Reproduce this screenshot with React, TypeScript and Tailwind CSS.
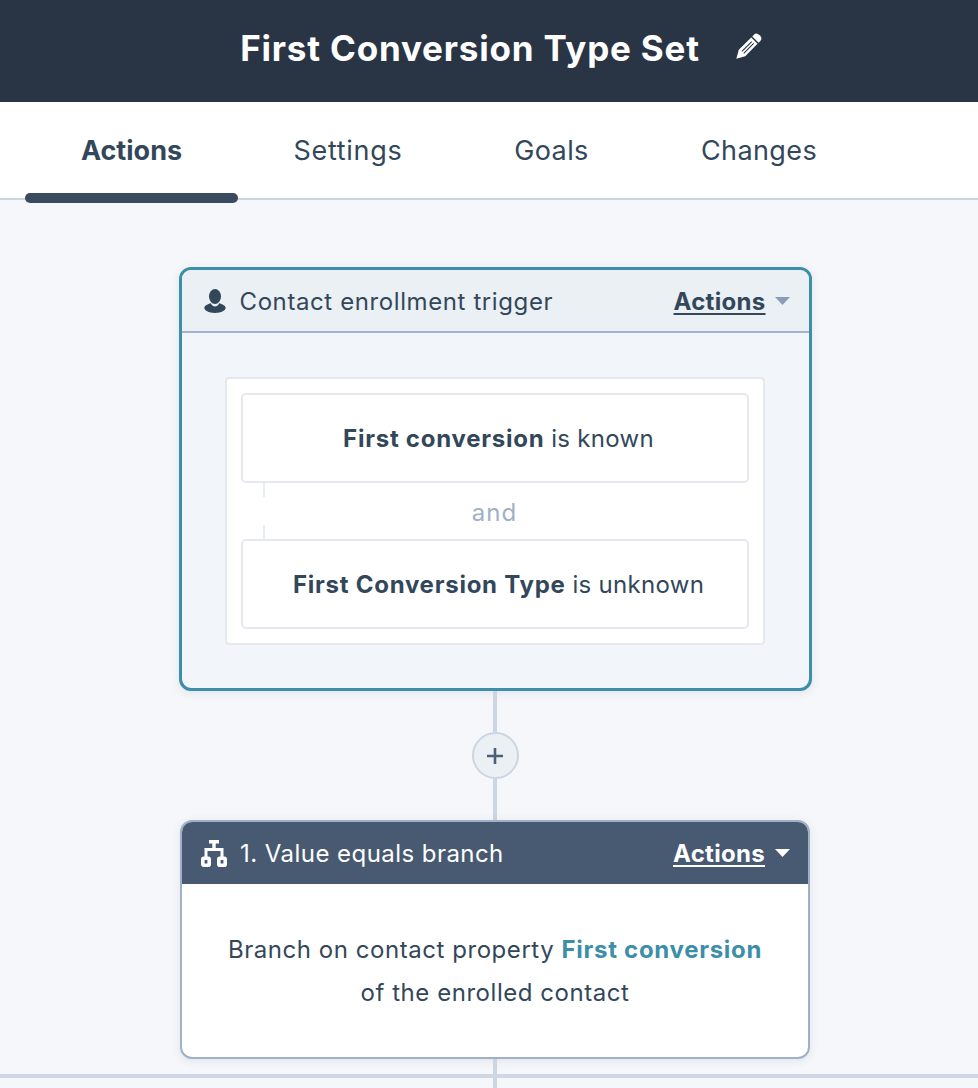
const font = "[font-family:'Inter','Lato',sans-serif]";

function Pencil() {
  return (
    <svg width="26" height="26" viewBox="0 0 26 26" className="block overflow-visible">
      <g transform="rotate(45 13 13)">
        <path d="M8.500 0a4.500 3.500 0 0 1 9 0V2.500H8.500Z" fill="#fff" />
        <path d="M8.500 4H17.500V21.500L13 29.500 8.500 21.500Z" fill="#fff" />
        <path d="M11.800 6.500V20.500M14.500 6.500V20.500" stroke="#293544" strokeWidth="1.100" fill="none" />
      </g>
    </svg>
  );
}

function Person() {
  return (
    <svg width="22" height="24" viewBox="0 0 22 24" className="block">
      <ellipse cx="11" cy="7.500" rx="6" ry="7.500" fill="#33475b" />
      <path d="M6.800 14.200C3.800 15.200.8 16 .3 18.800c0 2.700 4.200 5.200 10.700 5.200s10.700-2.500 10.700-5.200c-.5-2.800-3.500-3.600-6.500-4.600-1 2.300-2.700 3.300-4.200 3.300s-3.200-1-4.200-3.300Z" fill="#33475b" />
    </svg>
  );
}

function BranchIcon() {
  return (
    <svg width="26" height="27" viewBox="0 0 26 27" className="block" fill="none" stroke="#fff">
      <path d="M8 1.800H18M13 3V10" strokeWidth="3.400" />
      <path d="M5 17V9.500H21V17" strokeWidth="3" />
      <rect x="1.800" y="18.300" width="6.400" height="6.900" rx="1" strokeWidth="3.600" />
      <rect x="17.800" y="18.300" width="6.400" height="6.900" rx="1" strokeWidth="3.600" />
    </svg>
  );
}

function Caret({ color }: { color: string }) {
  return (
    <svg width="15" height="8" viewBox="0 0 15 8" className="block">
      <path d="M0 0H15L7.500 8Z" fill={color} />
    </svg>
  );
}

function Condition({ bold, rest }: { bold: string; rest: string }) {
  return (
    <div className="h-[90px] flex items-center justify-center rounded-[5px] border-2 border-[#e5e8ef] bg-white text-[24px] text-[#33475b] pl-[8px] pt-[2px]">
      <span>
        <b className="font-bold tracking-[0.75px]">{bold}</b> <span className="tracking-[0.3px]">{rest}</span>
      </span>
    </div>
  );
}

export default function App() {
  return (
    <div className={`w-[978px] h-[1088px] overflow-hidden flex flex-col bg-[#f5f7fa] ${font}`}>
      <header className="h-[102px] shrink-0 bg-[#293544] flex items-center justify-center gap-[35px] pl-[23px]">
        <h1 className="text-[35px] font-bold text-white leading-none pb-[6px] tracking-[0.8px]">First Conversion Type Set</h1>
        <div className="pb-[8px]"><Pencil /></div>
      </header>

      <nav className="h-[98px] shrink-0 bg-white border-b-2 border-[#cbd6e2] flex pl-[25px] relative text-[27px] text-[#33475b]">
        <div className="w-[213px] flex items-center justify-center font-bold pt-[2px] relative">
          Actions
          <span className="absolute left-0 right-0 bottom-[-5px] h-[10px] rounded-[5px] bg-[#3a4b60]" />
        </div>
        <div className="w-[220px] flex items-center justify-center pt-[2px] tracking-[0.7px]">Settings</div>
        <div className="w-[187px] flex items-center justify-center pt-[2px] tracking-[0.4px]">Goals</div>
        <div className="w-[228px] flex items-center justify-center pt-[2px] tracking-[0.4px]">Changes</div>
      </nav>

      <main className="flex-1 flex flex-col items-center pt-[67px] pl-[12px]">
        <section className="w-[633px] h-[424px] shrink-0 rounded-[12px] border-[3px] border-[#3d8ea9] bg-[#f2f5f9] shadow-[0_2px_10px_rgba(45,62,80,0.1)] flex flex-col overflow-hidden">
          <div className="h-[63px] shrink-0 bg-[#eaf0f4] border-b-2 border-[#a4b3c9] flex items-center pl-[22px] pr-[19px] text-[#33475b]">
            <Person />
            <span className="ml-[14px] pt-[2px] text-[24px] tracking-[0.6px]">Contact enrollment trigger</span>
            <span className="ml-auto pt-[2px] text-[24px] font-bold underline underline-offset-[3px] decoration-2 tracking-[0.3px]">Actions</span>
            <span className="ml-[9px]"><Caret color="#8a9db8" /></span>
          </div>
          <div className="pl-[43px] pr-[44px] pt-[44px]">
            <div className="h-[268px] rounded-[4px] border-2 border-[#e5e8ef] bg-white p-[14px] flex flex-col">
              <Condition bold="First conversion" rest="is known" />
              <div className="h-[56px] relative flex items-center justify-center text-[24px] text-[#9fb0c8] pt-[3px] tracking-[1px]">
                and
                <span className="absolute left-[22px] top-0 h-[14px] w-[2px] bg-[#e8ecf2]" />
                <span className="absolute left-[22px] bottom-0 h-[14px] w-[2px] bg-[#e8ecf2]" />
              </div>
              <Condition bold="First Conversion Type" rest="is unknown" />
            </div>
          </div>
        </section>

        <div className="w-[4px] h-[41px] shrink-0 bg-[#cbd6e2]" />
        <button className="size-[47px] shrink-0 rounded-full border-2 border-[#cbd6e2] bg-[#eaf0f4] flex items-center justify-center">
          <svg width="18" height="18" viewBox="0 0 18 18"><path d="M9 1V17M1 9H17" stroke="#4c5f7a" strokeWidth="2.600" /></svg>
        </button>
        <div className="w-[4px] h-[41px] shrink-0 bg-[#cbd6e2]" />

        <section className="w-[630px] h-[239px] shrink-0 rounded-[12px] border-2 border-[#a0b0c6] bg-white shadow-[0_2px_10px_rgba(45,62,80,0.1)] flex flex-col overflow-hidden">
          <div className="h-[62px] shrink-0 bg-[#475a72] flex items-center pl-[19px] pr-[18px] text-white">
            <BranchIcon />
            <span className="ml-[13px] pt-[2px] text-[24px] tracking-[0.45px]">1. Value equals branch</span>
            <span className="ml-auto pt-[2px] text-[24px] font-bold underline underline-offset-[3px] decoration-2 tracking-[0.3px]">Actions</span>
            <span className="ml-[10px]"><Caret color="#fff" /></span>
          </div>
          <div className="flex-1 flex flex-col items-center pt-[44px] text-[24px] leading-[43px] text-[#33475b] text-center tracking-[0.55px]">
            <p>Branch on contact property <b className="font-bold text-[#3d8ea9] tracking-[0.7px]">First conversion</b></p>
            <p>of the enrolled contact</p>
          </div>
        </section>

        <div className="w-[4px] h-[15px] shrink-0 bg-[#cbd6e2]" />
        <div className="w-[978px] -ml-[12px] h-[4px] shrink-0 bg-[#cfd9e5]" />
        <div className="w-[4px] h-[11px] shrink-0 bg-[#cbd6e2]" />
      </main>
    </div>
  );
}
